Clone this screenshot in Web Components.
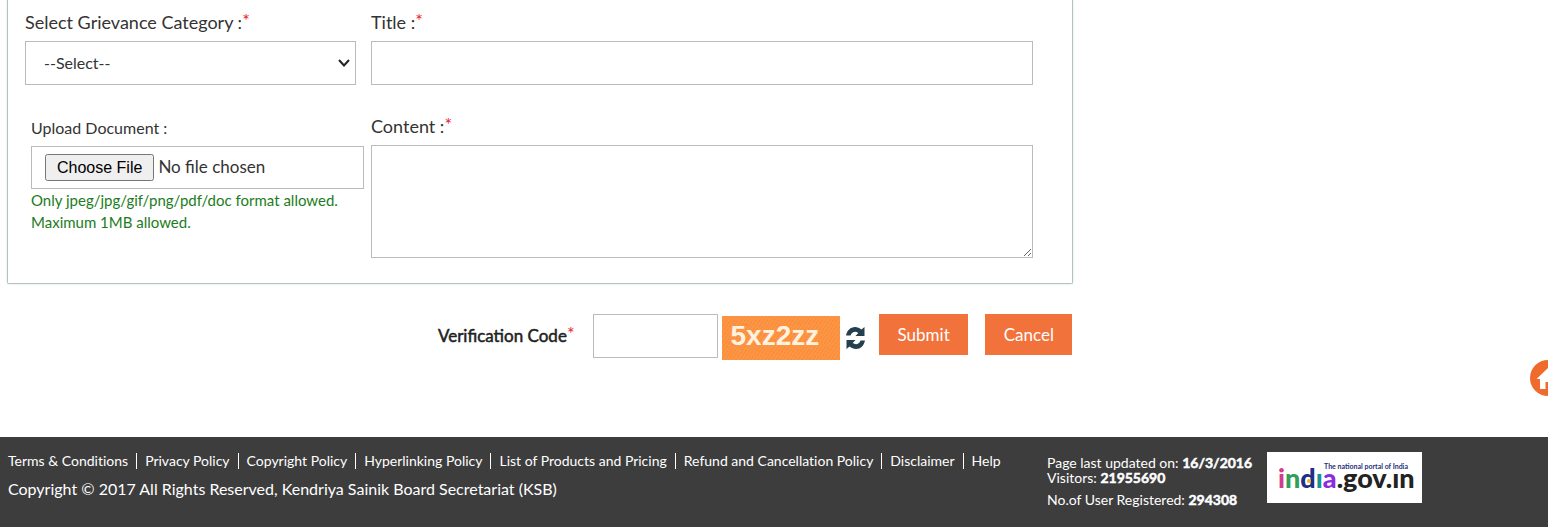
<!DOCTYPE html>
<html lang="en">
<head>
<meta charset="utf-8">
<title>Kendriya Sainik Board - Grievance</title>
<style>
    body {
        margin: 0;
        min-height: 100vh;
        display: flex;
        flex-direction: column;
        font-family: Lato, "Liberation Sans", sans-serif;
        font-size: 16px;
        color: #333;
        background: #fff;
        overflow-x: hidden;
    }
    main {
        flex: 1;
        display: grid;
        grid-template-columns: 41fr 18fr;
        align-content: start;
        padding: 0 7px 77px;
    }
</style>
</head>
<body>
<main>
    <div>
        <grievance-card>
            <form-field kind="select" label="Select Grievance Category :" required></form-field>
            <form-field kind="text" label="Title :" required></form-field>
            <form-field kind="file" label="Upload Document :">
                Only jpeg/jpg/gif/png/pdf/doc format allowed. Maximum 1MB allowed.
            </form-field>
            <form-field kind="area" label="Content :" required></form-field>
        </grievance-card>
        <verify-row code="5xz2zz">
            <action-button>Submit</action-button>
            <action-button>Cancel</action-button>
        </verify-row>
    </div>
</main>
<site-footer>
    <a href="#">Terms &amp; Conditions</a>
    <a href="#">Privacy Policy</a>
    <a href="#">Copyright Policy</a>
    <a href="#">Hyperlinking Policy</a>
    <a href="#">List of Products and Pricing</a>
    <a href="#">Refund and Cancellation Policy</a>
    <a href="#">Disclaimer</a>
    <a href="#">Help</a>
    <site-stats slot="stats" updated="16/3/2016" visitors="21955690" users="294308"></site-stats>
    <india-logo slot="logo"></india-logo>
</site-footer>
<home-link></home-link>

<script>
class GrievanceCard extends HTMLElement {
    constructor() {
        super();
        this.attachShadow({ mode: "open" });
    }

    connectedCallback() {
        this.shadowRoot.innerHTML = `
            <style>
                :host {
                    display: grid;
                    grid-template-columns: 1fr 2fr;
                    gap: 30px 15px;
                    padding: 11px 39px 25px 17px;
                    border: 1px solid #b0c4c4;
                    border-top: none;
                    border-radius: 0 0 2px 2px;
                    box-shadow: 0 0 2px #c8dada;
                }
            </style>
            <slot></slot>
        `;
    }
}

// kind is one of select, text, file, area
class FormField extends HTMLElement {
    constructor() {
        super();
        this.attachShadow({ mode: "open" });
    }

    control() {
        switch (this.getAttribute("kind")) {
            case "select": return `
                <div class="select">
                    <select id="field"><option>--Select--</option></select>
                    <svg width="12" height="8" viewBox="0 0 12 8" fill="none" stroke="#222" stroke-width="2">
                        <path d="M1 1L6 6.500L11 1"/>
                    </svg>
                </div>`;
            case "file": return `<input id="field" type="file">`;
            case "area": return `<textarea id="field"></textarea>`;
            default: return `<input id="field" type="text">`;
        }
    }

    connectedCallback() {
        const star = this.hasAttribute("required") ? `<span class="star">*</span>` : "";
        this.shadowRoot.innerHTML = `
            <style>
                :host {
                    display: block;
                    min-width: 0;
                }
                :host([kind="file"]) {
                    margin: 0 -8px 0 6px;
                }
                label {
                    display: block;
                    margin-bottom: 8px;
                    font-size: 18px;
                    line-height: 22px;
                }
                :host([kind="file"]) label {
                    margin-bottom: 5px;
                    font-size: 16px;
                    line-height: 26px;
                }
                .star {
                    color: #e8202a;
                    font-size: 18px;
                    line-height: 0;
                    vertical-align: 2px;
                }
                select, input, textarea {
                    display: block;
                    box-sizing: border-box;
                    width: 100%;
                    height: 44px;
                    margin: 0;
                    border: 1px solid #bbb;
                    border-radius: 0;
                    background: #fff;
                    color: #333;
                    font-family: inherit;
                    font-size: 16px;
                    padding: 8px 13px;
                }
                .select {
                    display: grid;
                    align-items: center;
                }
                .select > * {
                    grid-area: 1 / 1;
                }
                .select svg {
                    justify-self: end;
                    margin-right: 6px;
                    pointer-events: none;
                }
                select {
                    appearance: none;
                    padding: 7px 18px 9px;
                }
                textarea {
                    height: 113px;
                }
                input[type="file"] {
                    height: 43px;
                    padding: 7px 13px;
                    font-size: 17px;
                }
                input::file-selector-button {
                    height: 27px;
                    padding: 1px 10px;
                    font-family: "Liberation Sans", Arial, sans-serif;
                    font-size: 16px;
                }
                .hint {
                    color: #1c7c22;
                    font-size: 15px;
                    line-height: 22px;
                }
            </style>
            <label for="field">${this.getAttribute("label")}${star}</label>
            ${this.control()}
            <div class="hint"><slot></slot></div>
        `;
    }
}

class ActionButton extends HTMLElement {
    constructor() {
        super();
        this.attachShadow({ mode: "open" });
    }

    connectedCallback() {
        this.shadowRoot.innerHTML = `
            <style>
                :host {
                    display: block;
                }
                button {
                    display: block;
                    height: 41px;
                    padding: 0 18px 0 19px;
                    border: none;
                    background: #f1723b;
                    color: #fff;
                    font-family: inherit;
                    font-size: 17px;
                }
            </style>
            <button type="button"><slot></slot></button>
        `;
    }
}

class VerifyRow extends HTMLElement {
    constructor() {
        super();
        this.attachShadow({ mode: "open" });
    }

    connectedCallback() {
        this.shadowRoot.innerHTML = `
            <style>
                :host {
                    display: flex;
                    justify-content: flex-end;
                    align-items: flex-start;
                    padding: 30px 1px 0 0;
                }
                label {
                    margin-right: 18px;
                    font-size: 17px;
                    line-height: 44px;
                    color: #222;
                    -webkit-text-stroke: 0.5px #222;
                }
                .star {
                    color: #e8202a;
                    font-size: 18px;
                    line-height: 0;
                    vertical-align: 2px;
                    -webkit-text-stroke: 0;
                }
                input {
                    box-sizing: border-box;
                    width: 125px;
                    height: 44px;
                    margin: 0;
                    border: 1px solid #bbb;
                    padding: 8px 13px;
                    font: inherit;
                }
                .captcha {
                    box-sizing: border-box;
                    width: 118px;
                    height: 44px;
                    margin: 2px 6px 0 4px;
                    padding-left: 9px;
                    background: repeating-linear-gradient(125deg, #fd8c38 0 1px, #fb9647 1px 3px);
                    color: #fff3e0;
                    font: bold 28px/40px "Liberation Sans", Arial, sans-serif;
                }
                .refresh {
                    margin: 13px 14px 0 0;
                    padding: 0;
                    border: none;
                    background: none;
                }
                svg {
                    display: block;
                }
                .actions {
                    display: flex;
                    gap: 17px;
                }
            </style>
            <label for="code">Verification Code<span class="star">*</span></label>
            <input id="code" type="text">
            <div class="captcha">${this.getAttribute("code")}</div>
            <button class="refresh" type="button" aria-label="Refresh code">
                <svg width="19" height="22" viewBox="0 0 19 22" fill="#24404f">
                    <path d="M0 8.500C1 3.500 4.500 0 9 0C11.500 0 13.500 1 15.500 2.500L18.500 0V9H9.500L12.300 6C9.500 4 6 4.500 4.500 8.500Z"/>
                    <path d="M19 13.500C18 18.500 14.500 22 10 22C7.500 22 5.500 21 3.500 19.500L0.500 22V13H9.500L6.700 16C9.500 18 13 17.500 14.500 13.500Z"/>
                </svg>
            </button>
            <div class="actions"><slot></slot></div>
        `;
    }
}

class SiteFooter extends HTMLElement {
    constructor() {
        super();
        this.attachShadow({ mode: "open" });
    }

    connectedCallback() {
        this.shadowRoot.innerHTML = `
            <style>
                :host {
                    display: flex;
                    align-items: flex-start;
                    box-sizing: border-box;
                    min-height: 90px;
                    padding: 15px 8px 0;
                    background: #3d3d3d;
                    color: #fff;
                    font-variant-ligatures: none;
                }
                .left {
                    flex: 0 1 1039px;
                }
                nav {
                    display: flex;
                    flex-wrap: wrap;
                    padding-top: 1px;
                }
                ::slotted(a) {
                    margin-right: 8px;
                    padding-right: 8px;
                    border-right: 1px solid #fff;
                    color: #fff;
                    font-size: 14px;
                    line-height: 16px;
                    text-decoration: none;
                }
                ::slotted(a:last-of-type) {
                    border-right: none;
                }
                p {
                    margin: 10px 0 0;
                    font-size: 16px;
                    line-height: 20px;
                }
            </style>
            <div class="left">
                <nav><slot></slot></nav>
                <p>Copyright © 2017 All Rights Reserved, Kendriya Sainik Board Secretariat (KSB)</p>
            </div>
            <slot name="stats"></slot>
            <slot name="logo"></slot>
        `;
    }
}

class SiteStats extends HTMLElement {
    constructor() {
        super();
        this.attachShadow({ mode: "open" });
    }

    connectedCallback() {
        this.shadowRoot.innerHTML = `
            <style>
                :host {
                    display: block;
                    flex: none;
                    width: 220px;
                    padding-top: 3px;
                    font-size: 14px;
                    line-height: 15px;
                }
                div:last-child {
                    margin-top: 7px;
                }
                b {
                    -webkit-text-stroke: 0.5px #fff;
                }
            </style>
            <div>Page last updated on: <b>${this.getAttribute("updated")}</b></div>
            <div>Visitors: <b>${this.getAttribute("visitors")}</b></div>
            <div>No.of User Registered: <b>${this.getAttribute("users")}</b></div>
        `;
    }
}

class IndiaLogo extends HTMLElement {
    constructor() {
        super();
        this.attachShadow({ mode: "open" });
    }

    connectedCallback() {
        this.shadowRoot.innerHTML = `
            <style>
                :host {
                    display: block;
                    flex: none;
                    background: #fff;
                }
                svg {
                    display: block;
                }
                .name {
                    font: 900 27px Lato, sans-serif;
                }
                .tag {
                    font: bold 7px Lato, sans-serif;
                }
            </style>
            <svg width="155" height="51" viewBox="0 0 155 51">
                <text class="tag" x="57" y="17" fill="#26307c">The national portal of India</text>
                <text class="name" x="11" y="36"><tspan fill="#d23c8c">i</tspan><tspan fill="#2fa05a">n</tspan><tspan fill="#1d2f86">d</tspan><tspan fill="#1b8f96">ı</tspan><tspan fill="#8a2be2">a</tspan><tspan fill="#222">.gov.ın</tspan></text>
                <circle cx="42" cy="29" r="2" fill="#f2b51d"/>
            </svg>
        `;
    }
}

class HomeLink extends HTMLElement {
    constructor() {
        super();
        this.attachShadow({ mode: "open" });
    }

    connectedCallback() {
        // hangs half way over the window's right edge
        this.shadowRoot.innerHTML = `
            <style>
                :host {
                    position: fixed;
                    top: 360px;
                    right: -18px;
                }
                svg {
                    display: block;
                }
            </style>
            <a href="#" aria-label="Home">
                <svg width="36" height="36" viewBox="0 0 36 36">
                    <circle cx="18" cy="18" r="18" fill="#ee6b2d"/>
                    <path fill="#fff" d="M18 8L6.500 19H10V29H15.500V22H20.500V29H26V19H29.500L26 15.500V10H22.500V12Z"/>
                </svg>
            </a>
        `;
    }
}

customElements.define("grievance-card", GrievanceCard);
customElements.define("form-field", FormField);
customElements.define("action-button", ActionButton);
customElements.define("verify-row", VerifyRow);
customElements.define("site-footer", SiteFooter);
customElements.define("site-stats", SiteStats);
customElements.define("india-logo", IndiaLogo);
customElements.define("home-link", HomeLink);
</script>
</body>
</html>
